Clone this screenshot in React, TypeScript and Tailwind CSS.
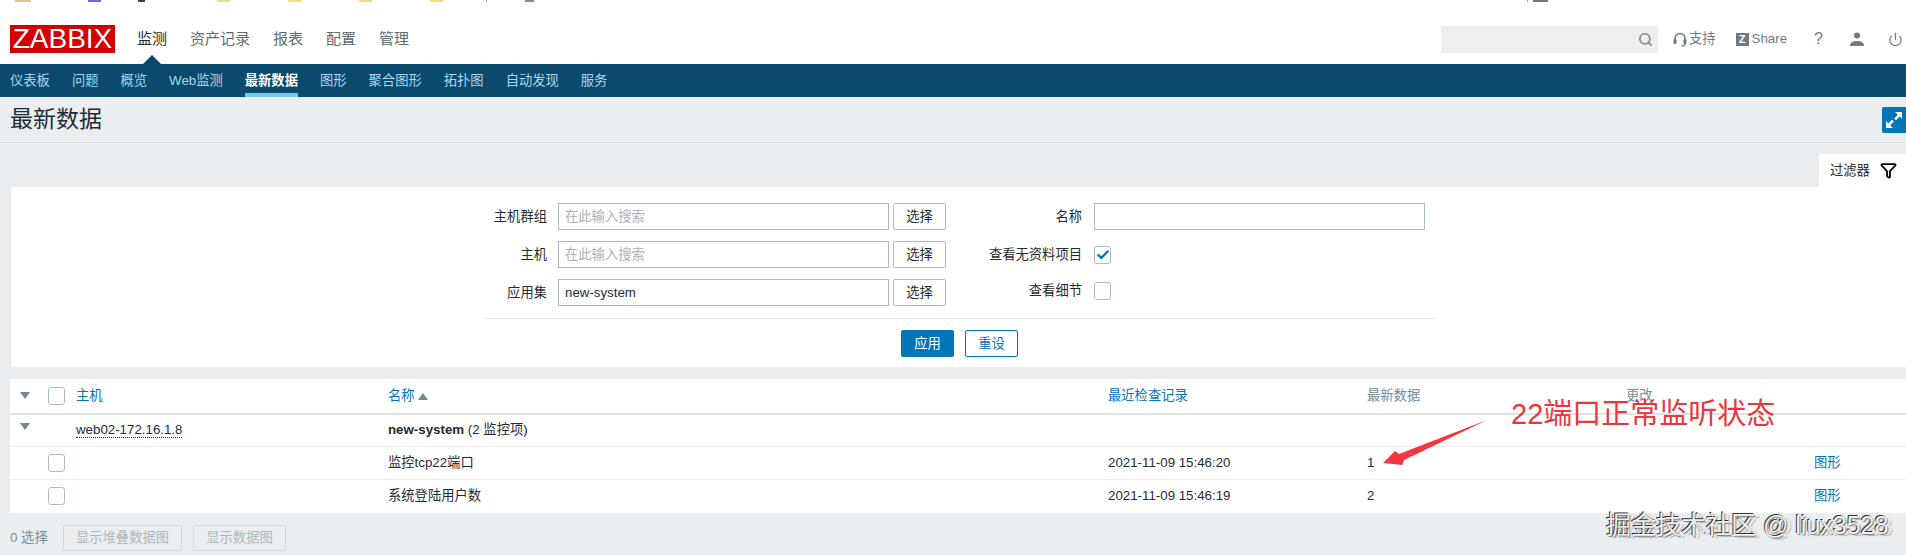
import { Check, Funnel, Power, Search } from "lucide-react";

const font = "font-['Liberation_Sans','Noto_Sans_CJK_SC',sans-serif]";

const menu = ["监测", "资产记录", "报表", "配置", "管理"];
const subMenu = ["仪表板", "问题", "概览", "Web监测", "最新数据", "图形", "聚合图形", "拓扑图", "自动发现", "服务"];

const bookmarks = [
  { w: "w-[16px]", ml: "ml-[15px]", color: "bg-[#d8c89a]" },
  { w: "w-[13px]", ml: "ml-[57px]", color: "bg-[#6a6ae0]" },
  { w: "w-[7px]", ml: "ml-[37px]", color: "bg-[#444444]" },
  { w: "w-[13px]", ml: "ml-[72px]", color: "bg-[#f7dc7c]" },
  { w: "w-[13px]", ml: "ml-[58px]", color: "bg-[#f7dc7c]" },
  { w: "w-[13px]", ml: "ml-[58px]", color: "bg-[#f7dc7c]" },
  { w: "w-[13px]", ml: "ml-[58px]", color: "bg-[#f7dc7c]" },
  { w: "w-[1px]", ml: "ml-[43px]", color: "bg-[#999999]" },
  { w: "w-[9px]", ml: "ml-[38px]", color: "bg-[#888888]" },
  { w: "w-[1px]", ml: "ml-[993px]", color: "bg-[#aaaaaa]" },
  { w: "w-[15px]", ml: "ml-[5px]", color: "bg-[#777777]" },
];

function Headphones() {
  return (
    <svg viewBox="0 0 14 15" className="h-[15px] w-[14px]" fill="none">
      <path d="M2 9V6.5a5 5 0 0 1 10 0V9" stroke="#6f7a80" strokeWidth="1.6" />
      <rect x="0.5" y="7" width="3" height="5" rx="1.2" fill="#6f7a80" />
      <rect x="10.5" y="7" width="3" height="5" rx="1.2" fill="#6f7a80" />
      <path d="M12 12c0 1.2-1.5 2-3.5 2" stroke="#6f7a80" strokeWidth="1.2" />
    </svg>
  );
}

function UserIcon() {
  return (
    <svg viewBox="0 0 14 14" className="h-[14px] w-[14px]" fill="#6f7a80">
      <circle cx="7" cy="3.4" r="3" />
      <path d="M0 14c0-3.6 3-5 7-5s7 1.4 7 5z" />
    </svg>
  );
}

function ExpandIcon() {
  return (
    <svg viewBox="0 0 16 16" className="h-[16px] w-[16px]" fill="white">
      <path d="M16 0v7l-2.4-2.4-3.6 3.6-1.8-1.8 3.6-3.6L9 0z" />
      <path d="M0 16V9l2.4 2.4 3.6-3.6 1.8 1.8-3.6 3.6L7 16z" />
    </svg>
  );
}

function Caret({ up }: { up?: boolean }) {
  return (
    <svg viewBox="0 0 10 7" className="h-[7px] w-[10px]" fill="#6d8a96">
      <path d={up ? "M5 0l5 7H0z" : "M0 0h10L5 7z"} />
    </svg>
  );
}

function Box({ checked }: { checked?: boolean }) {
  return (
    <span className="flex h-[18px] w-[17px] items-center justify-center rounded-[3px] border border-[#acbbc2] bg-white">
      {checked && <Check className="h-[14px] w-[14px] text-[#0275b8]" strokeWidth={4} />}
    </span>
  );
}

function TextInput({ value, placeholder }: { value?: string; placeholder?: string }) {
  return (
    <div className="flex h-full w-[331px] items-center border border-[#acbbc2] bg-white px-[6px] text-[13.3px]">
      {value ? <span className="text-[#1f2c33]">{value}</span> : <span className="text-[#a9b1b6]">{placeholder}</span>}
    </div>
  );
}

function SelectButton() {
  return (
    <button className="ml-[4px] h-full w-[53px] rounded-[2px] border border-[#acbbc2] bg-white text-[13.3px] text-[#1f2c33]">
      选择
    </button>
  );
}

function FilterRow({ label, first, side, second, raised }: { label: string; first: React.ReactNode; side: string; second: React.ReactNode; raised?: boolean }) {
  return (
    <div className="flex h-[27px] items-center">
      <span className="w-[63px] whitespace-nowrap text-right text-[13.3px] text-[#1f2c33]">{label}</span>
      <div className="ml-[11px] flex h-full">{first}</div>
      <SelectButton />
      <span className={`w-[136px] whitespace-nowrap text-right text-[13.3px] text-[#1f2c33] ${raised ? "pb-[4px]" : ""}`}>{side}</span>
      <div className={`ml-[12px] flex h-full items-center ${raised ? "pb-[4px]" : ""}`}>{second}</div>
    </div>
  );
}

export default function App() {
  return (
    <div className={`relative h-[555px] w-[1906px] overflow-hidden bg-[#ebeef0] ${font}`}>
      {/* cut off bookmark bar */}
      <div className="bg-white">
        <div className="flex h-[4px]">
          {bookmarks.map((b, i) => (
            <span key={i} className={`h-[2px] ${b.w} ${b.ml} ${b.color}`} />
          ))}
        </div>

        <header className="flex h-[60px] items-start pt-[21px]">
          <div className="ml-[10px] flex h-[28px] w-[105px] items-center justify-center bg-[#d40000] text-[28px] leading-none text-white">
            ZABBIX
          </div>
          <nav className="relative ml-[22px] flex h-[28px] items-center gap-[23px] text-[15px] text-[#5f6b71]">
            {menu.map((m, i) => (
              <span key={m} className={i === 0 ? "text-[#1f2c33]" : ""}>
                {m}
              </span>
            ))}
            <span className="absolute left-[6px] top-[30px] h-0 w-0 border-x-[9px] border-b-[9px] border-x-transparent border-b-[#0b4a6d]" />
          </nav>
          <div className="ml-auto flex h-[28px] items-center text-[13.3px] text-[#6f7a80]">
            <div className="flex h-[27px] w-[217px] items-center justify-end bg-[#eeeeee] pr-[5px]">
              <Search className="h-[15px] w-[15px] text-[#8a9094]" strokeWidth={3} />
            </div>
            <span className="ml-[15px]">
              <Headphones />
            </span>
            <span className="ml-[2px]">支持</span>
            <span className="ml-[20px] flex h-[13px] w-[13px] items-center justify-center bg-[#6f7a80] text-[11px] font-bold leading-none text-white">
              Z
            </span>
            <span className="ml-[3px]">Share</span>
            <span className="ml-[27px] text-[16px]">?</span>
            <span className="ml-[27px]">
              <UserIcon />
            </span>
            <Power className="ml-[24px] mr-[3px] h-[15px] w-[15px]" strokeWidth={2} />
          </div>
        </header>
      </div>

      <div className="flex h-[33px] gap-[22px] bg-[#0b4a6d] pl-[10px] text-[13.3px] text-[#a9d8ee]">
        {subMenu.map((s) => (
          <span
            key={s}
            className={
              s === "最新数据"
                ? "flex h-full items-center border-b-[4px] border-[#7fc4e8] pt-[4px] font-bold text-white"
                : "flex h-full items-center"
            }
          >
            {s}
          </span>
        ))}
      </div>

      <div className="flex h-[46px] items-center justify-between border-b border-[#dfe4e7] pl-[10px]">
        <h1 className="text-[23px] font-normal text-[#1f2c33]">最新数据</h1>
        <button className="flex h-[26px] w-[24px] items-center justify-center rounded-l-[2px] bg-[#0275b8]">
          <ExpandIcon />
        </button>
      </div>

      <div className="flex h-[44px] justify-end pt-[11px]">
        <div className="flex h-[33px] w-[87px] items-center bg-white pl-[11px] text-[13.3px] text-[#1f2c33]">
          过滤器
          <Funnel className="ml-[10px] h-[17px] w-[17px] text-black" strokeWidth={2.5} />
        </div>
      </div>

      <section className="ml-[10px] h-[180px] border-l border-[#e3e7e9] bg-white pl-[473px] pt-[16px]">
        <div className="flex flex-col gap-[11px]">
          <FilterRow
            label="主机群组"
            first={<TextInput placeholder="在此输入搜索" />}
            side="名称"
            second={<div className="h-[27px] w-[331px] border border-[#acbbc2] bg-white" />}
          />
          <FilterRow
            label="主机"
            first={<TextInput placeholder="在此输入搜索" />}
            side="查看无资料项目"
            second={<Box checked />}
          />
          <FilterRow label="应用集" first={<TextInput value="new-system" />} side="查看细节" second={<Box />} raised />
        </div>
        <div className="mt-[12px] w-[952px] border-t border-[#e5e9eb]" />
        <div className="ml-[417px] mt-[11px] flex gap-[11px] text-[13.3px]">
          <button className="h-[27px] w-[53px] rounded-[2px] bg-[#0275b8] text-white">应用</button>
          <button className="h-[27px] w-[53px] rounded-[2px] border border-[#0275b8] bg-white text-[#0275b8]">重设</button>
        </div>
      </section>

      <table className="ml-[10px] mt-[12px] w-[1896px] table-fixed bg-white text-left text-[13.3px] text-[#1f2c33]">
        <colgroup>
          <col className="w-[38px]" />
          <col className="w-[28px]" />
          <col className="w-[312px]" />
          <col className="w-[720px]" />
          <col className="w-[259px]" />
          <col className="w-[259px]" />
          <col className="w-[188px]" />
          <col />
        </colgroup>
        <thead>
          <tr className="h-[35px] border-b-2 border-[#dfe4e7] font-normal">
            <th className="pl-[10px] pb-[2px] font-normal"><Caret /></th>
            <th className="font-normal"><Box /></th>
            <th className="font-normal text-[#0275b8]">主机</th>
            <th className="font-normal text-[#0275b8]">
              <span className="flex items-center gap-[3px]">名称 <Caret up /></span>
            </th>
            <th className="font-normal text-[#0275b8]">最近检查记录</th>
            <th className="font-normal text-[#768d99]">最新数据</th>
            <th className="font-normal text-[#768d99]">更改</th>
            <th />
          </tr>
        </thead>
        <tbody>
          <tr className="h-[32px] border-b border-[#ebeef0]">
            <td className="pl-[10px] pb-[8px]"><Caret /></td>
            <td />
            <td>
              <span className="border-b border-dotted border-[#1f2c33]">web02-172.16.1.8</span>
            </td>
            <td colSpan={5}>
              <b>new-system</b> (2 监控项)
            </td>
          </tr>
          <tr className="h-[33px] border-b border-[#ebeef0]">
            <td />
            <td><Box /></td>
            <td />
            <td>监控tcp22端口</td>
            <td>2021-11-09 15:46:20</td>
            <td>1</td>
            <td />
            <td className="text-[#0275b8]">图形</td>
          </tr>
          <tr className="h-[34px]">
            <td />
            <td><Box /></td>
            <td />
            <td>系统登陆用户数</td>
            <td>2021-11-09 15:46:19</td>
            <td>2</td>
            <td />
            <td className="text-[#0275b8]">图形</td>
          </tr>
        </tbody>
      </table>

      <div className="ml-[10px] mt-[12px] flex h-[26px] items-center text-[13.3px] text-[#768d99]">
        <span className="w-[53px]">0 选择</span>
        <button className="h-full w-[119px] rounded-[2px] border border-[#d3d9dc] text-[#aeb8bd]">显示堆叠数据图</button>
        <button className="ml-[11px] h-full w-[93px] rounded-[2px] border border-[#d3d9dc] text-[#aeb8bd]">显示数据图</button>
      </div>

      {/* annotation drawn over the screenshot */}
      <span className="absolute left-[1511px] top-[396px] whitespace-nowrap text-[29px] leading-[36px] text-[#e8383d]">
        22端口正常监听状态
      </span>
      <svg className="absolute left-[1380px] top-[418px] h-[50px] w-[110px]" viewBox="0 0 110 50" fill="#f5363c">
        <path d="M3 45L15 33 19 36 107 2 24 42 22 47z" />
      </svg>

      {/* watermark */}
      <span className="absolute left-[1610px] top-[511px] whitespace-nowrap text-[25px] leading-[30px] text-[#ededed] opacity-60 [text-shadow:1px_1px_1px_#999999]">
        掘金技术社区 @ liux3528
      </span>
      <span className="absolute left-[1606px] top-[510px] whitespace-nowrap text-[25px] leading-[30px] text-[#f2f2f2] [text-shadow:-1px_-1px_0_#333333,1px_1px_1px_#777777]">
        掘金技术社区 @ liux3528
      </span>
    </div>
  );
}
